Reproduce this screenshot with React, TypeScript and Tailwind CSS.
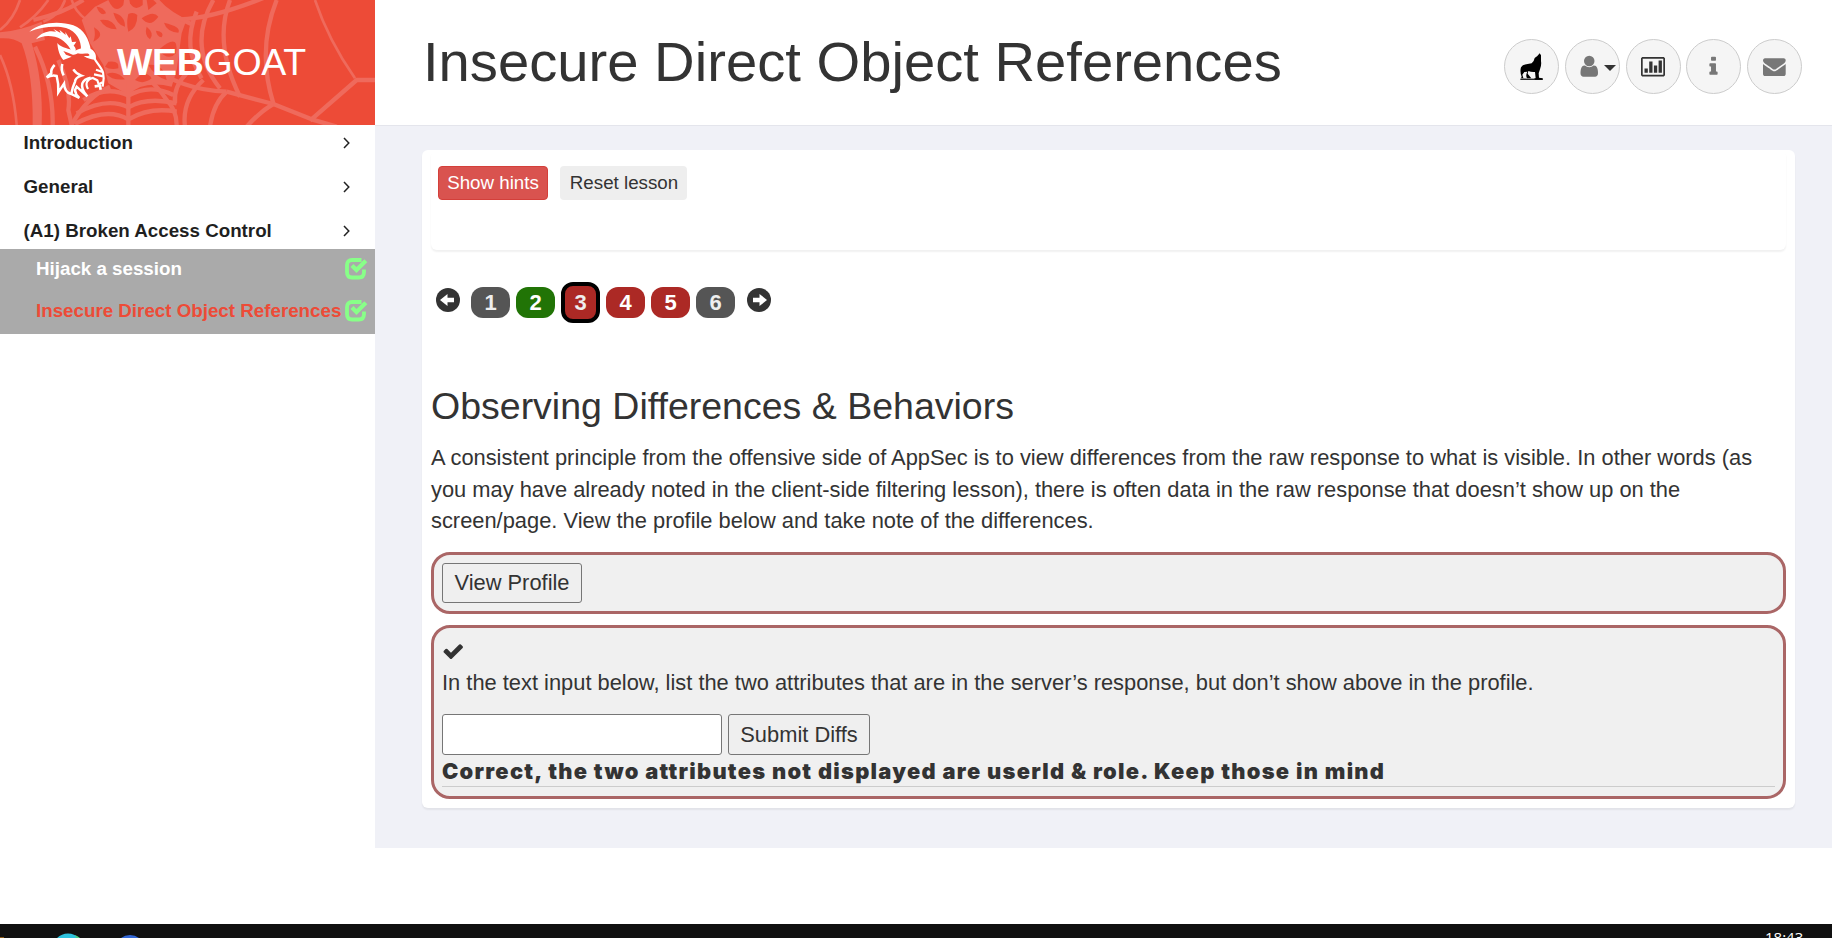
import React from "react";

function Web() {
  const thin = [
    "M60 0 Q40 60 0 90",
    "M145 0 Q110 50 60 82",
    "M0 165 Q40 250 50 375",
    "M945 0 Q985 120 1065 235",
    "M215 0 Q225 35 260 60",
    "M195 0 Q180 45 130 65",
  ];
  const medium = [
    "M250 0 Q190 40 100 60",
    "M105 140 Q160 250 158 375",
    "M690 0 Q640 130 720 290",
    "M830 0 Q770 150 820 310",
    "M640 0 Q560 140 660 265",
    "M590 35 Q545 140 605 235",
    "M540 58 Q640 55 800 -10",
    "M470 0 Q500 40 580 75",
    "M680 275 L820 312 L935 358 L1010 380",
    "M820 312 Q780 335 740 380",
    "M1125 240 H1070 L930 362",
    "M680 275 Q640 310 630 380",
    "M610 240 Q545 300 555 380",
    "M560 220 Q520 260 525 310",
    "M175 180 Q215 270 205 330 L215 375",
    "M230 340 Q320 290 385 322 Q440 290 530 310",
    "M225 372 Q320 320 385 358 Q450 320 530 335",
    "M250 300 Q320 255 385 287 Q450 250 520 285",
    "M385 230 V375",
    "M330 260 Q260 290 215 375",
    "M400 200 Q470 250 500 300 Q530 330 530 375",
    "M440 190 Q540 270 680 275",
  ];
  const petals = [
    "M282 82 Q320 105 280 125 Q288 105 282 82",
    "M300 60 Q340 55 350 88 Q315 88 300 60",
    "M340 38 Q375 45 375 80 Q350 75 340 38",
    "M385 42 Q400 35 412 45 Q412 85 385 95 Q378 70 385 42",
    "M425 55 Q460 30 475 50 Q450 85 425 55",
    "M440 80 Q465 100 450 118 Q432 105 440 80",
    "M468 92 Q495 95 485 112 Q470 110 468 92",
    "M492 68 Q545 80 535 98 Q500 95 492 68",
    "M475 150 Q540 95 528 160 Q505 185 475 150",
    "M325 0 Q345 45 370 15 L372 0Z",
    "M390 10 Q405 35 428 15 L428 0 H388Z",
    "M440 0 L445 30 L470 10 L460 0Z",
    "M325 185 Q360 180 355 205 Q330 210 315 200",
    "M320 222 Q350 210 375 238 Q335 242 320 222",
    "M405 240 Q435 205 455 235 Q430 255 405 240",
    "M445 195 Q490 190 500 240 Q465 230 445 195",
    "M290 20 Q310 20 318 40 Q300 50 290 20",
  ];
  return (
    <svg className="absolute inset-0" width="375" height="125" viewBox="0 0 1125 375" fill="none" stroke="#ef6a5c" strokeLinejoin="round">
      <path d="M0 97 Q60 92 125 65 L135 120 L95 130 Q130 240 125 375 H98 Q100 220 65 130 Q40 112 0 115Z" fill="#ef6a5c" stroke="none" />
      <path d="M245 60 L285 20 L325 0 H470 Q510 40 560 58 L545 100 L530 210 L515 260 Q430 240 385 285 L325 250 L310 195 L270 130Z" fill="#ef6a5c" stroke="none" />
      <g strokeWidth="8">{thin.map((d) => <path key={d} d={d} />)}</g>
      <g strokeWidth="13">{medium.map((d) => <path key={d} d={d} />)}</g>
      <g fill="#ed4b37" stroke="none">{petals.map((d) => <path key={d} d={d} />)}</g>
    </svg>
  );
}

function Goat() {
  return (
    <svg className="relative shrink-0" width="100" height="90" viewBox="0 0 300 270" fill="#fff">
      <path d="M28 50 C60 20 120 17 160 31 C192 42 208 75 213 107 L183 104 C184 78 170 48 138 39 C105 31 60 38 28 50Z" />
      <path d="M48 73 C66 48 92 46 108 50 L100 42 L122 54 L118 44 L137 60 L136 51 L148 70 L152 64 L156 81 L169 80 L161 92 C170 100 170 112 158 119 C152 94 130 71 105 65 C80 60 62 64 48 73Z" />
      <path d="M112 84 C120 95 132 97 150 103 L178 111 C167 122 156 120 148 115 L130 108 L138 119 L155 125 L130 135 C118 122 113 102 112 84Z" />
      <path d="M163 110 C175 99 195 96 213 102 C226 110 230 122 227 134 C215 134 203 131 191 123 C208 124 212 121 205 116 C195 115 180 120 163 110Z" />
      <g fill="none" stroke="#fff" strokeWidth="6.5" strokeLinejoin="miter">
        <path d="M222 128 C228 142 243 155 249 172 L251 190 L248 215 M228 164 L250 172 M222 178 L250 184" />
        <path d="M204 222 C194 205 202 192 218 189 L232 196 L236 208 L248 202" />
        <path d="M224 214 L240 212 L242 224" strokeWidth="8" />
        <path d="M104 150 Q92 162 94 174 L80 187 Q98 178 110 183 Q116 205 115 232 L132 206 Q134 232 152 236 L178 249 Q166 238 165 225 L170 215 L202 244 Q182 222 187 205 Q192 192 212 188" strokeWidth="7.5" />
        <path d="M127 147 Q122 165 131 181 M160 163 Q168 176 184 182 Q166 188 165 200 Q158 215 154 236" strokeWidth="7.5" />
      </g>
    </svg>
  );
}

function Wolf() {
  return (
    <svg width="23" height="27" viewBox="61 59 69 81" fill="#000">
      <path d="M120 60 L124 66 L124 84 Q126 95 121 108 L117 120 L118 133 L129 135 V139 H106 L104 135 H64 L66 130 Q60 115 64 102 Q68 94 80 93 L96 90 Q104 82 105 74 L113 68Z M74 116 L68 124 L71 134 L82 135 Q77 126 83 115Z M86 113 L84 121 L95 135 H108 L106 116 Q95 117 86 113Z" fillRule="evenodd" />
      <path d="M62 136 H129 V139.500 H62Z" />
    </svg>
  );
}

function Stats() {
  return (
    <svg width="24" height="20" viewBox="0 0 24 20" fill="#333">
      <path d="M1.2 0 H22.8 L24 1.2 V18.2 L22.8 19.4 H1.2 L0 18.2 V1.2Z M1.7 1.7 V17.7 H22.3 V1.7Z" fillRule="evenodd" />
      <path d="M3.5 11.4h3.3v4.3H3.5z M8.2 4.4h3.3v11.3H8.2z M12.9 8.4h3.3v7.3h-3.3z M17.6 3.4h3.3v12.3h-3.3z" />
    </svg>
  );
}

function Icon({ d, size }: { d: string; size: number }) {
  return <svg className="shrink-0" width={size} height={size} viewBox="0 0 1792 1792" fill="currentColor"><path d={d} /></svg>;
}

const USER = "M1536 1399q0 109-62.5 187t-150.5 78h-854q-88 0-150.5-78t-62.5-187q0-85 8.5-160.5t31.5-152 58.5-131 94-89 134.5-34.5q131 128 313 128t313-128q76 0 134.5 34.5t94 89 58.5 131 31.5 152 8.5 160.5zm-256-887q0 159-112.5 271.5t-271.5 112.5-271.5-112.5-112.5-271.5 112.5-271.5 271.5-112.5 271.5 112.5 112.5 271.5z";
const INFO = "M1216 1344v128q0 26-19 45t-45 19h-512q-26 0-45-19t-19-45v-128q0-26 19-45t45-19h64v-384h-64q-26 0-45-19t-19-45v-128q0-26 19-45t45-19h384q26 0 45 19t19 45v576h64q26 0 45 19t19 45zm-128-1152v192q0 26-19 45t-45 19h-256q-26 0-45-19t-19-45v-192q0-26 19-45t45-19h256q26 0 45 19t19 45z";
const ENVELOPE = "M1792 710v794q0 66-47 113t-113 47h-1472q-66 0-113-47t-47-113v-794q44 49 101 87 362 246 497 345 57 42 92.5 65.5t94.5 48 110 24.5h2q51 0 110-24.5t94.5-48 92.5-65.5q170-123 498-345 57-39 100-87zm0-294q0 79-49 151t-122 123q-376 261-468 325-10 7-42.5 31t-54 38.5-52 32.5-57.5 27-50 9h-2q-23 0-50-9t-57.5-27-52-32.5-54-38.5-42.5-31q-91-64-262-182.5t-205-142.5q-62-42-117-115.5t-55-136.5q0-78 41.5-130t118.5-52h1472q65 0 112.5 47t47.5 113z";
const CHECK = "M1671 566q0 40-28 68l-724 724-136 136q-28 28-68 28t-68-28l-136-136-362-362q-28-28-28-68t28-68l136-136q28-28 68-28t68 28l294 295 656-657q28-28 68-28t68 28l136 136q28 28 28 68z";

function Solved() {
  return (
    <svg width="23" height="22" viewBox="0 0 23 22" fill="none" stroke="#8f8" strokeWidth="3.8">
      <path d="M16.5 2 H7 Q2 2 2 7 V14 Q2 19.5 7 19.5 H14 Q19 19.5 19 14 V11.5" />
      <path d="M7 7.5 L11.5 12 L20.8 2.8" strokeWidth="4.2" />
    </svg>
  );
}

function Chevron() {
  return (
    <svg width="7" height="12" viewBox="0 0 7 12" fill="none" stroke="#222" strokeWidth="1.5">
      <path d="M1 1 L5.8 6 L1 11" />
    </svg>
  );
}

function CircleArrow({ className }: { className: string }) {
  return (
    <svg className={className} width="24" height="24" viewBox="0 0 24 24">
      <circle cx="12" cy="12" r="12" fill="#333" />
      <path d="M4 12 L11.5 6 V9.8 H18 V14.2 H11.5 V18Z" fill="#fff" />
    </svg>
  );
}

const circle = "flex h-[55px] w-[55px] items-center justify-center rounded-full border border-[#ccc] bg-[#f5f5f5] text-[#777]";
const pageBase = "flex w-[39px] items-center justify-center rounded-[12px] text-[22px] font-bold";

const pages = [
  { n: 1, style: "h-[31px] bg-[#555] text-[#eee]" },
  { n: 2, style: "h-[31px] bg-[#217406] text-white" },
  { n: 3, style: "h-[41px] border-4 border-black bg-[#ac2925] text-[#eee]" },
  { n: 4, style: "h-[31px] bg-[#ac2925] text-white" },
  { n: 5, style: "h-[31px] bg-[#ac2925] text-white" },
  { n: 6, style: "h-[31px] bg-[#555] text-[#eee]" },
];

export default function App() {
  return (
    <div className="flex h-[938px] w-[1832px] flex-col overflow-hidden bg-white font-['Liberation_Sans',Arial,sans-serif] text-[#333]">
      <div className="flex h-[924px] shrink-0">
        <aside className="w-[375px] shrink-0">
          <div className="relative flex h-[125px] items-start overflow-hidden bg-[#ed4b37] pl-5 pt-[15px]">
            <Web />
            <Goat />
            <div className="relative -ml-[3px] mt-[19px] whitespace-nowrap text-[37.5px] leading-[56px] tracking-[-0.3px] text-white"><b>WEB</b>GOAT</div>
          </div>
          <nav className="text-[18.75px] font-bold text-[#1f1f1f]">
            {["Introduction", "General", "(A1) Broken Access Control"].map((t) => (
              <div key={t} className="flex h-11 items-center justify-between pb-2 pl-[23.5px] pr-[25px]">
                <span className="whitespace-nowrap">{t}</span>
                <Chevron />
              </div>
            ))}
            <div className="-mt-2 bg-[#aaa] pl-9 pr-[7px]">
              <div className="flex h-[42px] items-center justify-between pb-[3px] text-white"><span className="pt-[2px]">Hijack a session</span><Solved /></div>
              <div className="flex h-[43px] items-center justify-between whitespace-nowrap pb-[3px] text-[#ed4b37]"><span className="pt-px">Insecure Direct Object References</span><Solved /></div>
            </div>
          </nav>
        </aside>
        <div className="flex grow flex-col">
          <header className="flex h-[125px] shrink-0 items-center justify-between pl-12 pr-[30px]">
            <h1 className="whitespace-nowrap text-[56.2px] leading-none">Insecure Direct Object References</h1>
            <div className="mt-2 flex gap-[5.75px]">
              <div className={circle}><Wolf /></div>
              <div className={`${circle} gap-[2px] pl-[8px]`}>
                <Icon d={USER} size={24.5} />
                <svg className="mt-[3px] shrink-0" width="12" height="6" viewBox="0 0 12 6" fill="#333"><path d="M0 0H12L6 6Z" /></svg>
              </div>
              <div className={circle}><Stats /></div>
              <div className={circle}><Icon d={INFO} size={23} /></div>
              <div className={circle}><Icon d={ENVELOPE} size={22.7} /></div>
            </div>
          </header>
          <main className="h-[723px] border-t border-[#e4e5ec] bg-[#f0f1f7] pl-[47px] pr-[37px] pt-6">
            <section className="h-[658px] rounded-[6px] bg-white px-[9px] shadow-[0_2px_2px_rgba(0,0,0,0.06)]">
              <div className="flex h-[100px] items-start gap-3 rounded-[6px] pl-[7px] pt-4 shadow-[0_2px_2px_rgba(0,0,0,0.06)]">
                <button className="h-[34px] w-[110px] whitespace-nowrap rounded-[4px] border border-[#d43f3a] bg-[#d9534f] text-[18.75px] leading-none text-white">Show hints</button>
                <button className="h-[34px] w-[127px] whitespace-nowrap rounded-[4px] bg-[#eee] pl-px text-[18.75px] leading-none">Reset lesson</button>
              </div>
              <div className="mt-8 flex h-[41px] items-center pl-[5px]">
                <CircleArrow className="-mt-[5px] mr-[11px]" />
                <div className="flex items-center gap-1.5">
                  {pages.map((p) => (
                    <div key={p.n} className={`${pageBase} ${p.style}`}>{p.n}</div>
                  ))}
                </div>
                <CircleArrow className="-mt-[5px] ml-[11.5px] rotate-180" />
              </div>
              <h2 className="mt-[58px] h-[50px] text-[37.5px] leading-[50px]">Observing Differences &amp; Behaviors</h2>
              <p className="mt-[11px] whitespace-nowrap text-[21.875px] leading-[31.5px]">
                A consistent principle from the offensive side of AppSec is to view differences from the raw response to what is visible. In other words (as<br />
                you may have already noted in the client-side filtering lesson), there is often data in the raw response that doesn’t show up on the<br />
                screen/page. View the profile below and take note of the differences.
              </p>
              <div className="mt-[15px] h-[62px] rounded-[19px] border-[3px] border-[#a66] bg-[#f0f0f0] p-2">
                <button className="h-10 w-[140px] rounded-[3px] border border-[#767676] bg-[#efefef] text-[21.875px] leading-none">View Profile</button>
              </div>
              <div className="mt-[11px] h-[174px] rounded-[19px] border-[3px] border-[#a66] bg-[#f0f0f0] px-2 pt-[12px]">
                <Icon d={CHECK} size={22.5} />
                <p className="mt-[4.5px] whitespace-nowrap text-[21.875px] leading-[31px]">In the text input below, list the two attributes that are in the server’s response, but don’t show above in the profile.</p>
                <div className="mt-4 flex gap-1.5">
                  <input className="h-[41px] w-[280px] rounded-[3px] border border-[#767676] bg-white" />
                  <button className="h-[41px] w-[142px] rounded-[3px] border border-[#767676] bg-[#efefef] pt-px text-[21.875px] leading-none">Submit Diffs</button>
                </div>
                <div className="h-8 whitespace-nowrap border-b border-[#ccc] font-['Inter',sans-serif] text-[21.875px] font-black leading-8 tracking-[1.27px]">Correct, the two attributes not displayed are userId &amp; role. Keep those in mind</div>
              </div>
            </section>
          </main>
        </div>
      </div>
      <footer className="relative h-[14px] shrink-0 overflow-hidden bg-[#101010]">
        <svg className="absolute left-0 top-0" width="150" height="14">
          <rect x="0" y="13" width="4" height="1" fill="#8a5a18" />
          <circle cx="68" cy="25" r="15.5" fill="#2ec2de" />
          <path d="M75 11 Q79 13 80 14 H76Z" fill="#4ccf82" />
          <circle cx="130" cy="26" r="15" fill="#3367d6" />
        </svg>
        <span className="absolute left-[1765px] top-[3px] font-['Open_Sans',sans-serif] text-[15px] leading-[20px] text-white">18:43</span>
      </footer>
    </div>
  );
}
